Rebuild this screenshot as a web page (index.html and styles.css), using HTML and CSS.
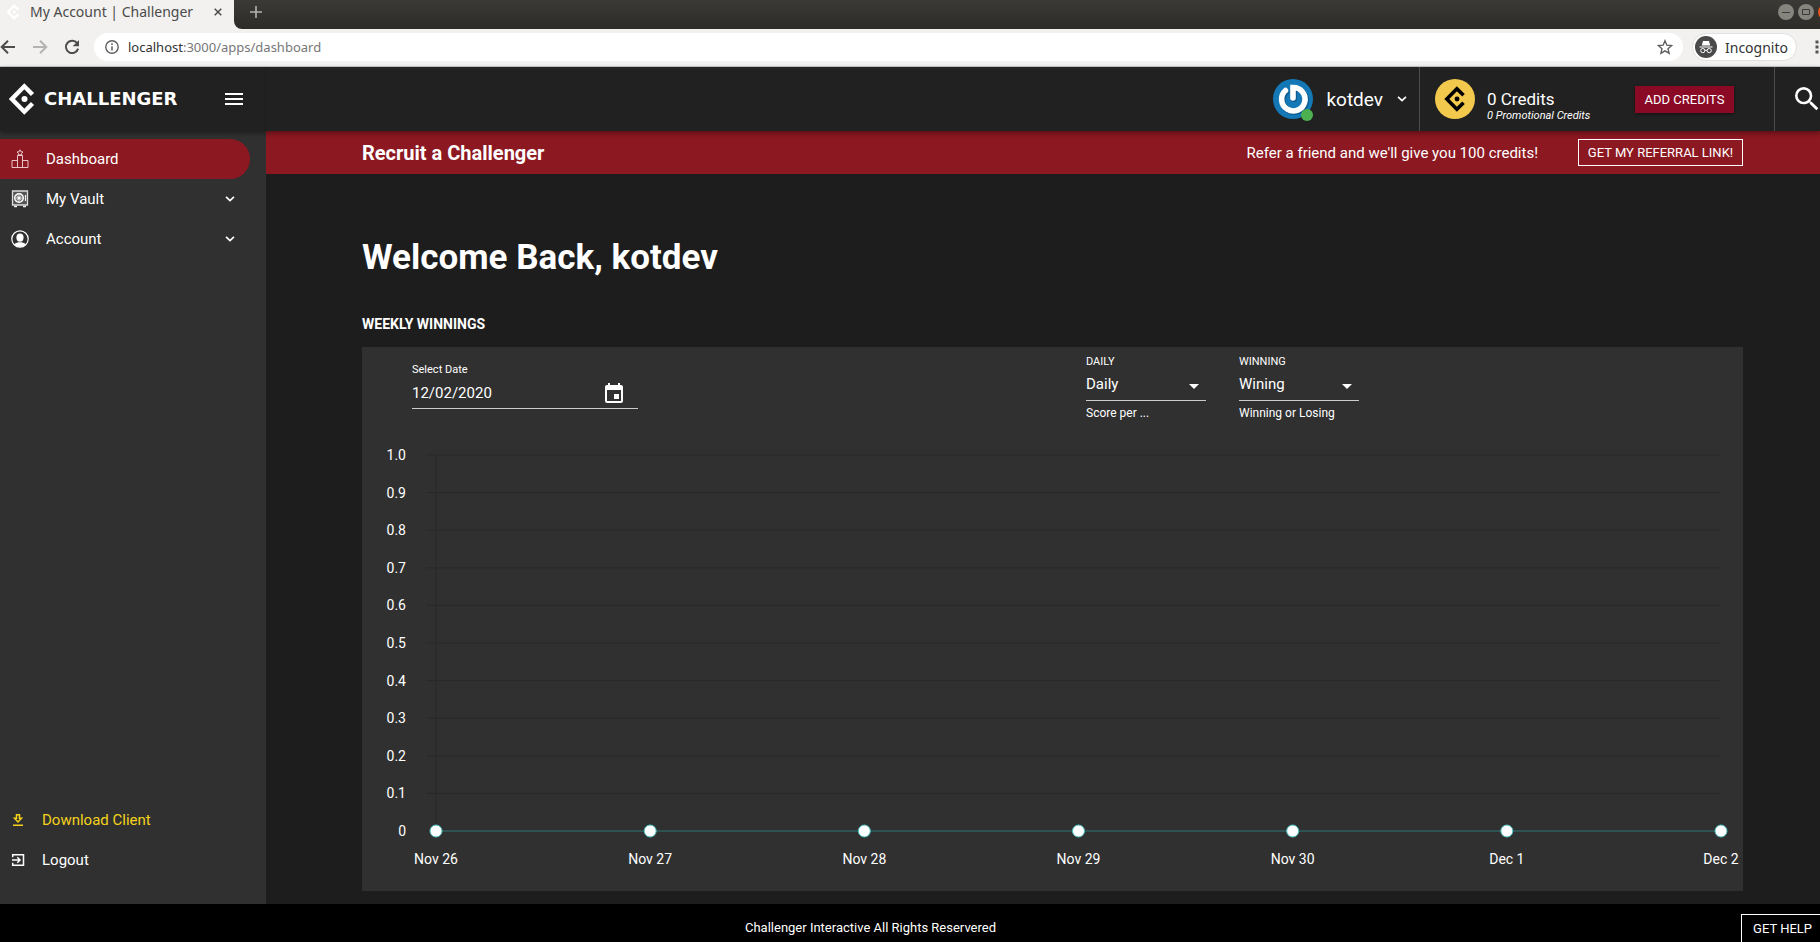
FILE: index.html
```html
<!DOCTYPE html>
<html lang="en">
<head>
<meta charset="utf-8">
<title>My Account | Challenger</title>
<link rel="stylesheet" href="styles.css">
</head>
<body>
<svg class="defs" aria-hidden="true">
  <symbol id="mark" viewBox="0 0 26 32">
    <path d="M23.5 11.5 15.3 3.3 2.9 16l12.4 12.7 8.2-8.2" fill="none" stroke="currentColor" stroke-width="4.4"/>
    <circle cx="15.5" cy="16" r="3" fill="currentColor"/>
  </symbol>
  <symbol id="chevron" viewBox="0 0 10 10"><path d="M1.700 3.200 5 6.300 8.300 3.200" fill="none" stroke="currentColor" stroke-width="1.400"/></symbol>
</svg>

<div class="tabstrip">
  <div class="tab">
    <svg class="tab-icon"><use href="#mark"/></svg>
    <span class="tab-title">My Account | Challenger</span>
    <button class="tab-close" aria-label="Close tab"><svg width="8" height="8" viewBox="0 0 8 8"><path d="M.7.7l6.6 6.6M7.3.7.7 7.3" stroke="#4a4a48" stroke-width="1.500"/></svg></button>
  </div>
  <div class="strip">
    <button class="new-tab" aria-label="New tab"><svg width="12" height="12" viewBox="0 0 12 12"><path d="M6 0v12M0 6h12" stroke="#b4b3ae" stroke-width="1.6"/></svg></button>
    <div class="window-buttons">
      <button aria-label="Minimize"><svg width="16" height="16"><path d="M4 8.500h8" stroke="#3a3935"/></svg></button>
      <button aria-label="Maximize"><svg width="16" height="16"><path d="M4.500 5.500h7v5h-7z" fill="none" stroke="#3a3935"/></svg></button>
      <button class="close" aria-label="Close"></button>
    </div>
  </div>
</div>

<div class="toolbar">
  <button class="nav-button" aria-label="Back"><svg width="16" height="16" viewBox="0 0 16 16"><path d="M15 8H2.500M8 1.700 1.700 8 8 14.300" fill="none" stroke="#4d4d4b" stroke-width="2"/></svg></button>
  <button class="nav-button" aria-label="Forward"><svg width="16" height="16" viewBox="0 0 16 16"><path d="M1 8h12.500M8 1.700 14.300 8 8 14.300" fill="none" stroke="#b4b3b1" stroke-width="2"/></svg></button>
  <button class="nav-button" aria-label="Reload"><svg width="16" height="16" viewBox="0 0 16 16"><path d="M13.200 4.300A6.200 6.200 0 1 0 14.100 9.600" fill="none" stroke="#4d4d4b" stroke-width="2"/><path d="M15 1v6.300H8.700z" fill="#4d4d4b"/></svg></button>
  <div class="address">
    <svg width="14" height="14" viewBox="0 0 14 14"><circle cx="7" cy="7" r="6.200" fill="none" stroke="#5f5f5f" stroke-width="1.400"/><path d="M7 6.200v4.300M7 3.300v1.600" stroke="#5f5f5f" stroke-width="1.500"/></svg>
    <span class="url"><b>localhost</b>:3000/apps/dashboard</span>
    <svg width="16" height="16" viewBox="0 0 24 24"><path d="M12 2.500l2.800 6.700 7.200.6-5.500 4.700 1.700 7.100-6.200-3.800-6.200 3.800 1.700-7.100L2 9.800l7.200-.6z" fill="none" stroke="#5b5b5b" stroke-width="2"/></svg>
  </div>
  <div class="incognito">
    <svg width="22" height="22" viewBox="0 0 22 22"><circle cx="11" cy="11" r="11" fill="#4a4a4b"/><path d="M4.500 10.500h13v1h-13zM6.800 9.500 8 5h6l1.200 4.500z" fill="#fff"/><circle cx="7.800" cy="14.600" r="2.100" fill="none" stroke="#fff"/><circle cx="14.200" cy="14.600" r="2.100" fill="none" stroke="#fff"/><path d="M9.900 14.300h2.200" stroke="#fff"/></svg>
    <span>Incognito</span>
  </div>
  <button class="more" aria-label="Menu"><svg width="4" height="14" viewBox="0 0 4 14"><path d="M.5.5h3v3h-3zM.5 5.500h3v3h-3zM.5 10.500h3v3h-3z" fill="#555"/></svg></button>
</div>

<header class="header">
  <div class="brand">
    <svg class="brand-mark"><use href="#mark"/></svg>
    <span class="brand-name">CHALLENGER</span>
    <button class="menu" aria-label="Toggle menu"><svg width="18" height="12" viewBox="0 0 18 12"><path d="M0 1h18M0 6h18M0 11h18" stroke="#fff" stroke-width="2"/></svg></button>
  </div>
  <button class="user">
    <span class="avatar">
      <svg width="40" height="40" viewBox="0 0 40 40"><circle cx="20" cy="20" r="20" fill="#1478b6"/><path d="M12.500 11.500A11.700 11.700 0 1 0 20 8.500V19" fill="none" stroke="#0c5a8e" stroke-width="6" stroke-linecap="round" transform="translate(1 1)"/><path d="M12.500 11.500A11.700 11.700 0 1 0 20 8.500V19" fill="none" stroke="#fff" stroke-width="5.600" stroke-linecap="round"/></svg>
      <i class="online"></i>
    </span>
    <span>kotdev</span>
    <svg class="chevron"><use href="#chevron"/></svg>
  </button>
  <div class="credits">
    <span class="coin"><svg><use href="#mark"/></svg></span>
    <div class="amounts">
      <span class="amount">0 Credits</span>
      <em class="promo">0 Promotional Credits</em>
    </div>
    <button class="add">ADD CREDITS</button>
  </div>
  <button class="search" aria-label="Search"><svg width="24" height="24" viewBox="3 3 18 18"><path d="M15.500 14h-.79l-.28-.27A6.471 6.471 0 0 0 16 9.500 6.500 6.500 0 1 0 9.500 16c1.610 0 3.090-.59 4.230-1.570l.27.28v.79l5 4.990L20.490 19l-4.990-5zm-6 0C7.010 14 5 11.990 5 9.500S7.010 5 9.500 5 14 7.010 14 9.500 11.990 14 9.500 14z" fill="#fff"/></svg></button>
</header>

<div class="shell">
  <nav class="sidebar">
    <div class="links">
      <a class="link active" href="#">
        <svg width="18" height="20" viewBox="0 0 18 20"><path d="M6.500 18.500v-12h5v12M1 11.500h5.500v7H1zM11.500 11.500H17v7h-5.500zM1 18.500h16" fill="none" stroke="#e9c0c3"/><path d="M9 .8l.9 1.900 2.100.3-1.500 1.400.4 2.100L9 5.500l-1.900 1 .4-2.100L6 3l2.100-.3z" fill="none" stroke="#f3d8da" stroke-width=".9"/></svg>
        <span>Dashboard</span>
      </a>
      <a class="link" href="#">
        <svg width="18" height="20" viewBox="0 0 18 20"><path d="M1.500 2h15v14h-15z" fill="#555" stroke="#ddd" stroke-width="1.300"/><circle cx="8" cy="9" r="4.300" fill="#777" stroke="#fff" stroke-width="1.400"/><path d="M8 4.500v9M3.500 9h9M5 6l6 6M11 6l-6 6" stroke="#ddd" stroke-width=".7"/><circle cx="8" cy="9" r="1.500" fill="#fff"/><path d="M14.500 6v6" stroke="#eee" stroke-width="1.200"/><path d="M3 17.500h3M12 17.500h3" stroke="#eee" stroke-width="1.600"/></svg>
        <span>My Vault</span>
        <svg class="chevron"><use href="#chevron"/></svg>
      </a>
      <a class="link" href="#">
        <svg width="18" height="20" viewBox="0 0 18 20"><circle cx="9" cy="10" r="8.200" fill="none" stroke="#fff" stroke-width="1.200"/><ellipse cx="9" cy="8.600" rx="3.600" ry="4.200" fill="#fff"/><path d="M3.200 15.400C4.600 13.600 7 13.300 9 13.300s4.400.3 5.800 2.100A8 8 0 0 1 9 18a8 8 0 0 1-5.800-2.600z" fill="#fff"/></svg>
        <span>Account</span>
        <svg class="chevron"><use href="#chevron"/></svg>
      </a>
    </div>
    <div class="bottom-links">
      <a class="link download" href="#">
        <svg width="14" height="14" viewBox="0 0 14 14"><path d="M5.500 1.700h3v3.600h2L7 9 3.500 5.300h2zM2 12.200h10" fill="none" stroke="currentColor" stroke-width="1.500"/></svg>
        <span>Download Client</span>
      </a>
      <a class="link" href="#">
        <svg width="14" height="14" viewBox="0 0 14 14"><path d="M1.700 4.200V1.700h10.800v10.600H1.700V9.800M1 7h7.500M6.300 4.300 9 7 6.300 9.700" fill="none" stroke="currentColor" stroke-width="1.500"/></svg>
        <span>Logout</span>
      </a>
    </div>
  </nav>

  <main class="main">
    <section class="banner">
      <h2>Recruit a Challenger</h2>
      <p>Refer a friend and we'll give you 100 credits!</p>
      <button class="outline">GET MY REFERRAL LINK!</button>
    </section>
    <div class="content">
      <h1>Welcome Back, kotdev</h1>
      <h3>WEEKLY WINNINGS</h3>
      <section class="card">
        <form class="filters">
          <div class="date-field">
            <label for="date">Select Date</label>
            <div class="date-row">
              <input id="date" type="text" value="12/02/2020">
              <button type="button" aria-label="Open calendar"><svg width="18" height="20" viewBox="3 1 18 20"><path d="M17 12h-5v5h5v-5zM16 1v2H8V1H6v2H5c-1.110 0-1.990.9-1.990 2L3 19a2 2 0 0 0 2 2h14c1.100 0 2-.9 2-2V5c0-1.100-.9-2-2-2h-1V1h-2zm3 18H5V8h14v11z" fill="#fff"/></svg></button>
            </div>
          </div>
          <div class="selects">
            <div class="select-field">
              <label for="period">DAILY</label>
              <div class="select-box"><select id="period"><option>Daily</option></select></div>
              <small>Score per ...</small>
            </div>
            <div class="select-field">
              <label for="kind">WINNING</label>
              <div class="select-box"><select id="kind"><option>Wining</option></select></div>
              <small>Winning or Losing</small>
            </div>
          </div>
        </form>
        <svg class="chart" role="img" aria-label="Weekly winnings">
          <g class="grid">
            <line x1="-10" x2="100%" y1="0" y2="0"/><line x1="-10" x2="100%" y1="10%" y2="10%"/><line x1="-10" x2="100%" y1="20%" y2="20%"/><line x1="-10" x2="100%" y1="30%" y2="30%"/><line x1="-10" x2="100%" y1="40%" y2="40%"/><line x1="-10" x2="100%" y1="50%" y2="50%"/><line x1="-10" x2="100%" y1="60%" y2="60%"/><line x1="-10" x2="100%" y1="70%" y2="70%"/><line x1="-10" x2="100%" y1="80%" y2="80%"/><line x1="-10" x2="100%" y1="90%" y2="90%"/><line x1="-10" x2="100%" y1="100%" y2="100%"/>
            <line x1="0" x2="0" y1="0" y2="100%"/>
          </g>
          <g class="y-labels">
            <text x="-30" y="0" dy="5">1.0</text><text x="-30" y="10%" dy="5">0.9</text><text x="-30" y="20%" dy="5">0.8</text><text x="-30" y="30%" dy="5">0.7</text><text x="-30" y="40%" dy="5">0.6</text><text x="-30" y="50%" dy="5">0.5</text><text x="-30" y="60%" dy="5">0.4</text><text x="-30" y="70%" dy="5">0.3</text><text x="-30" y="80%" dy="5">0.2</text><text x="-30" y="90%" dy="5">0.1</text><text x="-30" y="100%" dy="5">0</text>
          </g>
          <line class="series" x1="0" x2="100%" y1="100%" y2="100%"/>
          <g class="points">
            <circle cx="0" cy="100%" r="6"/><circle cx="16.667%" cy="100%" r="6"/><circle cx="33.333%" cy="100%" r="6"/><circle cx="50%" cy="100%" r="6"/><circle cx="66.667%" cy="100%" r="6"/><circle cx="83.333%" cy="100%" r="6"/><circle cx="100%" cy="100%" r="6"/>
          </g>
          <g class="x-labels">
            <text x="0" y="100%" dy="33">Nov 26</text><text x="16.667%" y="100%" dy="33">Nov 27</text><text x="33.333%" y="100%" dy="33">Nov 28</text><text x="50%" y="100%" dy="33">Nov 29</text><text x="66.667%" y="100%" dy="33">Nov 30</text><text x="83.333%" y="100%" dy="33">Dec 1</text><text x="100%" y="100%" dy="33">Dec 2</text>
          </g>
        </svg>
      </section>
    </div>
  </main>
</div>

<footer class="footer">
  <p>Challenger Interactive All Rights Reservered</p>
  <button class="help">GET HELP</button>
</footer>
</body>
</html>
```

FILE: styles.css
```css
* { box-sizing: border-box; }
body {
  margin: 0;
  height: 100vh;
  display: flex;
  flex-direction: column;
  overflow: hidden;
  background: #1d1d1d;
  color: #fff;
  font-family: Roboto, "Liberation Sans", sans-serif;
  font-size: 15px;
}
h1, h2, h3, p { margin: 0; }
button, input, select { font: inherit; color: inherit; background: none; border: 0; padding: 0; margin: 0; }
button svg { display: block; }
a { color: inherit; text-decoration: none; }
.defs { display: none; }
.chevron { width: 12px; height: 12px; }

/* browser frame */
.tabstrip, .toolbar { font-family: "Noto Sans", "Open Sans", sans-serif; flex: none; }
.tabstrip { display: flex; height: 29px; background: #f2f1f0; }
.tab { width: 234px; display: flex; align-items: center; padding: 0 12px 6px 6px; color: #4a4a48; font-size: 14px; }
.tab-icon { width: 14px; height: 16px; color: #fff; }
.tab-title { flex: 1; padding-left: 10px; white-space: nowrap; }
.strip {
  flex: 1; min-width: 0; display: flex; justify-content: space-between; align-items: center;
  padding: 0 0 5px 16px; overflow: hidden;
  background: linear-gradient(#3b3a37, #2c2b28);
  border-bottom-left-radius: 8px;
}
.window-buttons { display: flex; gap: 4px; width: 42px; }
.window-buttons button { flex: none; width: 16px; height: 16px; border-radius: 50%; background: #85847d; }
.window-buttons .close { background: #e95420; }
.toolbar {
  display: flex; align-items: center; height: 38px; gap: 16px; padding-bottom: 1px;
  background: #f2f1f0; border-bottom: 1px solid #c9cbcb; color: #333; font-size: 14px;
}
.nav-button { flex: none; }
.address {
  flex: 1; display: flex; align-items: center; gap: 9px; height: 28px; margin: 0 -7px 0 -2px;
  padding: 0 10px 0 11px; border-radius: 14px; background: #fff;
}
.url { flex: 1; color: #777; font-size: 13px; }
.url b { font-weight: 400; color: #333; }
.incognito {
  display: flex; align-items: center; gap: 8px; height: 28px; padding: 0 8px 0 2px;
  border: 1px solid #e2e1e0; border-radius: 14px; background: #fff;
}
.more { margin: 0 1px 0 2px; }

/* application header */
.header {
  position: relative; flex: none; display: flex; align-items: stretch; height: 64px;
  background: #212121; box-shadow: 0 2px 5px rgba(0, 0, 0, .4);
}
.brand { width: 266px; margin-right: auto; display: flex; align-items: center; padding: 0 22px 0 9px; border-right: 1px solid #1d1d1d; }
.brand-mark { width: 26px; height: 32px; }
.brand-name { flex: 1; padding-left: 9px; font: bold 18px/20px "DejaVu Sans", sans-serif; }
.user { display: flex; align-items: center; gap: 13px; padding-right: 11px; font-size: 19px; border-right: 1px solid #4c4c4c; }
.avatar { position: relative; height: 40px; }
.online { position: absolute; right: 0; bottom: -2px; width: 12px; height: 12px; border-radius: 50%; background: #4caf50; }
.credits { display: flex; align-items: center; width: 355px; padding: 0 40px 0 15px; border-right: 1px solid #4c4c4c; }
.coin { display: grid; place-items: center; width: 40px; height: 40px; border-radius: 50%; background: #f2c94c; color: #000; }
.coin svg { width: 22px; height: 26px; }
.amounts { flex: 1; display: flex; flex-direction: column; padding: 14px 0 0 12px; }
.amount { font-size: 17px; line-height: 20px; }
.promo { font-size: 11px; line-height: 14px; }
.add { width: 99px; height: 27px; background: #8a0a25; font-size: 13px; box-shadow: 0 1px 3px rgba(0, 0, 0, .5); }
.search { width: 45px; padding-left: 20px; }

/* layout */
.shell { flex: 1; min-height: 0; display: flex; }
.sidebar { flex: none; width: 266px; display: flex; flex-direction: column; justify-content: space-between; padding: 8px 0 24px; background: #303030; }
.link { display: flex; align-items: center; height: 40px; padding: 0 14px 0 11px; margin-right: 16px; gap: 17px; border-radius: 0 20px 20px 0; }
.link span { flex: 1; }
.link.active { background: #8c1821; }
.link.download { color: #f5d21c; }
.main { flex: 1; min-width: 0; display: flex; flex-direction: column; }
.banner { flex: none; display: flex; align-items: center; height: 43px; padding: 0 77px 0 96px; background: #8c1821; }
.banner h2 { flex: 1; font-size: 20px; line-height: 24px; }
.banner p { padding-right: 40px; }
.outline { width: 165px; height: 27px; border: 1px solid #fff; font-size: 13px; }
.content { flex: 1; display: flex; flex-direction: column; padding: 64px 77px 13px 96px; }
h1 { font-size: 35px; line-height: 40px; }
h3 { margin: 36px 0 13px; font-size: 14px; line-height: 20px; }

/* chart card */
.card { flex: 1; min-height: 0; display: flex; flex-direction: column; background: #303030; padding-bottom: 60px; }
.filters { display: flex; height: 108px; padding: 8px 0 0 50px; }
.filters label { font-size: 11px; line-height: 14px; }
.date-field { width: 226px; padding-top: 8px; display: flex; flex-direction: column; }
.date-row { display: flex; align-items: center; justify-content: space-between; height: 32px; padding: 1px 15px 0 0; border-bottom: 1px solid #ccc; }
.date-row input { width: 120px; min-width: 0; }
.selects { display: flex; gap: 33px; margin-left: 448px; }
.select-field { width: 120px; display: flex; flex-direction: column; }
.select-box { position: relative; border-bottom: 1px solid #ccc; height: 32px; }
.select-box::after {
  content: ""; position: absolute; right: 7px; top: 15px;
  border: 5px solid transparent; border-top-color: #fff; border-bottom: 0; pointer-events: none;
}
.select-box select { appearance: none; width: 100%; height: 30px; font-size: 15px; }
.select-field small { font-size: 12px; line-height: 24px; }
.chart { flex: 1; min-height: 0; margin: 0 22px 0 74px; overflow: visible; fill: #fff; font-size: 14px; }
.grid line { stroke: #292929; }
.y-labels { text-anchor: end; }
.x-labels { text-anchor: middle; }
.series { stroke: #2f7b7b; }
.points circle { fill: #fff; stroke: #4bc0c0; }

/* footer */
.footer { position: relative; flex: none; display: flex; height: 38px; padding-top: 10px; background: #000; font-size: 13px; }
.footer p { flex: 1; text-align: center; line-height: 28px; }
.help { width: 79px; padding-right: 8px; border: 1px solid #fff; border-width: 1px 0 0 1px; text-align: right; }
```
